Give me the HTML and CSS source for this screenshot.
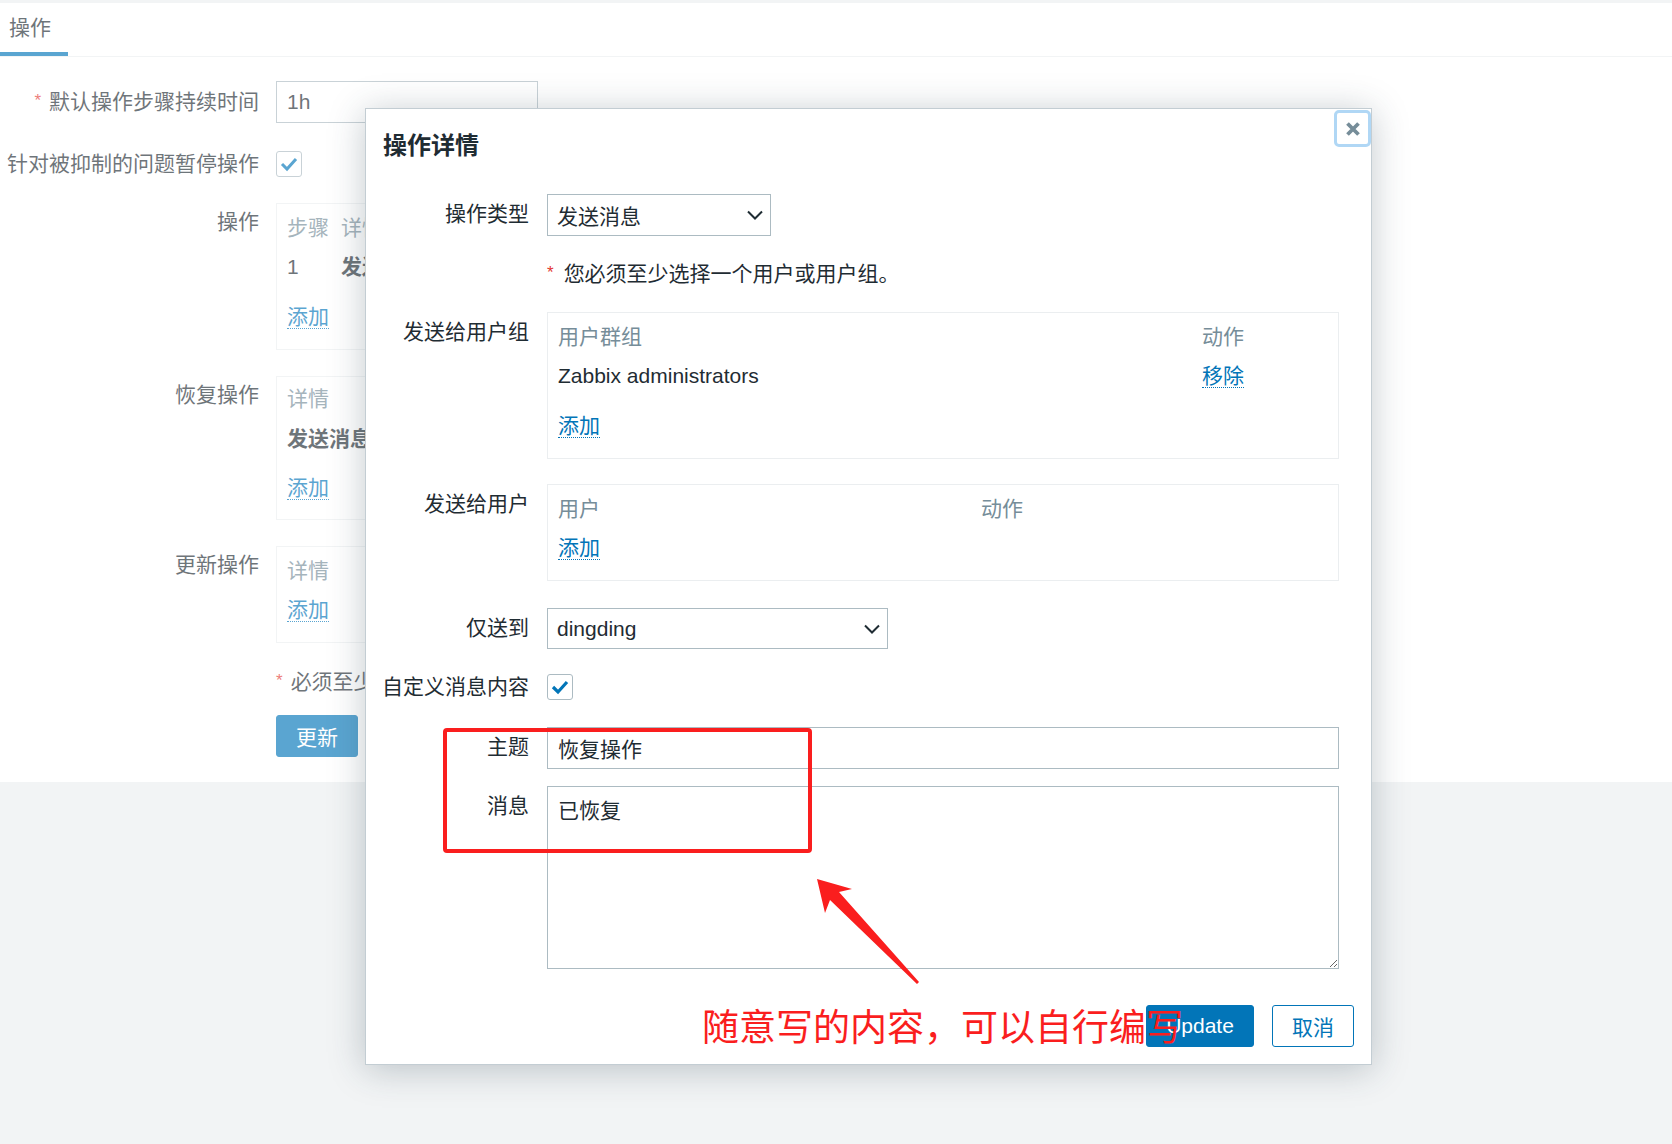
FILE: index.html
```html
<!DOCTYPE html>
<html lang="zh-CN">
<head>
<meta charset="utf-8">
<title>操作详情</title>
<link rel="stylesheet" href="styles.css">
</head>
<body>
  <main class="page">
    <div class="tabs"><div class="tab">操作</div></div>
    <div class="form">
      <div class="frow">
        <div class="flabel"><span class="req">*</span>默认操作步骤持续时间</div>
        <input class="input" type="text" value="1h">
      </div>
      <div class="frow">
        <div class="flabel cb">针对被抑制的问题暂停操作</div>
        <div class="checkbox"><svg width="20" height="20" viewBox="0 0 20 20"><polyline points="3,10 8,15 17,5" fill="none" stroke="#0275b8" stroke-width="3"/></svg></div>
      </div>
      <div class="frow">
        <div class="flabel tb">操作</div>
        <div class="tbox lbox">
          <div class="trow ops"><span class="th">步骤</span><span class="th">详情</span></div>
          <div class="trow ops"><span>1</span><span class="b">发送消息给用户组: Zabbix administrators 通过 dingding</span></div>
          <div class="add-row"><span class="link">添加</span></div>
        </div>
      </div>
      <div class="frow">
        <div class="flabel tb">恢复操作</div>
        <div class="tbox lbox short">
          <div class="trow head"><span class="th">详情</span></div>
          <div class="trow"><span class="b">发送消息给用户组: Zabbix administrators 通过 dingding</span></div>
          <div class="add-row"><span class="link">添加</span></div>
        </div>
      </div>
      <div class="frow">
        <div class="flabel tb">更新操作</div>
        <div class="tbox lbox">
          <div class="trow"><span class="th">详情</span></div>
          <div class="add-row tight"><span class="link">添加</span></div>
        </div>
      </div>
      <div class="frow">
        <div class="flabel"></div>
        <div class="note"><span class="req">*</span>必须至少设置一个问题、恢复或更新操作。</div>
      </div>
      <div class="frow btnrow">
        <div class="flabel"></div>
        <button class="btn primary">更新</button>
      </div>
    </div>
  </main>

  <div class="dim"></div>

  <section class="dialog">
    <button class="close" aria-label="close"><svg width="16" height="16" viewBox="0 0 16 16"><path d="M2.5 2.5 L13.5 13.5 M13.5 2.5 L2.5 13.5" stroke="#768d99" stroke-width="3.8" fill="none"/></svg></button>
    <div class="dlg-head"><h2 class="title">操作详情</h2></div>
    <div class="dlg-form">
      <div class="drow">
        <div class="dlabel">操作类型</div>
        <div class="select type"><span>发送消息</span><svg width="16" height="10" viewBox="0 0 16 10"><polyline points="1,1.5 8,8.5 15,1.5" fill="none" stroke="#1f2c33" stroke-width="2"/></svg></div>
      </div>
      <div class="drow">
        <div class="dlabel"></div>
        <div class="hint"><span class="req">*</span>您必须至少选择一个用户或用户组。</div>
      </div>
      <div class="drow">
        <div class="dlabel">发送给用户组</div>
        <div class="tbox field">
          <div class="trow grp"><span class="th">用户群组</span><span class="th">动作</span></div>
          <div class="trow grp"><span>Zabbix administrators</span><span><span class="link">移除</span></span></div>
          <div class="add-row"><span class="link">添加</span></div>
        </div>
      </div>
      <div class="drow">
        <div class="dlabel">发送给用户</div>
        <div class="tbox field">
          <div class="trow usr"><span class="th">用户</span><span class="th">动作</span></div>
          <div class="add-row tight"><span class="link">添加</span></div>
        </div>
      </div>
      <div class="drow mt2">
        <div class="dlabel">仅送到</div>
        <div class="select media"><span>dingding</span><svg width="16" height="10" viewBox="0 0 16 10"><polyline points="1,1.5 8,8.5 15,1.5" fill="none" stroke="#1f2c33" stroke-width="2"/></svg></div>
      </div>
      <div class="drow">
        <div class="dlabel cb">自定义消息内容</div>
        <div class="checkbox"><svg width="20" height="20" viewBox="0 0 20 20"><polyline points="3,10 8,15 17,5" fill="none" stroke="#0275b8" stroke-width="3.2"/></svg></div>
      </div>
      <div class="drow mt2">
        <div class="dlabel">主题</div>
        <input class="input wide" type="text" value="恢复操作">
      </div>
      <div class="drow tight-top">
        <div class="dlabel">消息</div>
        <textarea class="textarea">已恢复</textarea>
      </div>
    </div>
    <div class="dlg-foot">
      <button class="btn primary upd">Update</button>
      <button class="btn ghost">取消</button>
    </div>
  </section>

  <div class="anno-box"></div>
  <svg class="anno-arrow" width="116" height="120" viewBox="0 0 116 120">
    <polygon points="7,9 42,19 29,22 109,112 107,114 20,30 15,43" fill="#fa1e1e"/>
  </svg>
  <div class="anno-text">随意写的内容，可以自行编写</div>
</body>
</html>
```

FILE: styles.css
```css
* { box-sizing: border-box; }

html, body { margin: 0; padding: 0; }

body {
  position: relative;
  width: 1672px;
  height: 1144px;
  overflow: hidden;
  background: #ebeef0;
  font-family: "Liberation Sans", "Noto Sans CJK SC", sans-serif;
  font-size: 21px;
  color: #1f2c33;
}

/* ---------- page behind the dialog ---------- */
.page {
  margin-top: 3px;
  background: #fff;
  padding-bottom: 25px;
}

.tabs {
  display: flex;
  height: 54px;
  border-bottom: 1px solid #ebeef0;
}

.tab {
  height: 53px;
  padding: 0 17px 0 9px;
  line-height: 49px;
  border-bottom: 4px solid #0275b8;
}

.form {
  display: flex;
  flex-direction: column;
  gap: 26px;
  padding-top: 24px;
}

.frow {
  display: flex;
  gap: 17px;
  align-items: flex-start;
}

.flabel {
  flex: none;
  width: 259px;
  text-align: right;
  line-height: 42px;
  white-space: nowrap;
}
.flabel.cb { line-height: 26px; }
.flabel.tb { line-height: 38px; }

.req {
  color: #e33734;
  font-size: 17px;
  margin-right: 8px;
  position: relative;
  top: -3px;
}

.input {
  width: 262px;
  height: 42px;
  border: 1px solid #acbbc2;
  padding: 0 10px;
  font: inherit;
  color: #1f2c33;
  background: #fff;
  outline: none;
  margin: 0;
}
.input.wide { width: 792px; height: 42px; }

.checkbox {
  width: 26px;
  height: 26px;
  border: 1px solid #acbbc2;
  border-radius: 3px;
  background: #fff;
  display: flex;
  align-items: center;
  justify-content: center;
}

.tbox {
  border: 1px solid #ebeef0;
  padding: 4px 10px 13px;
  white-space: nowrap;
  background: #fff;
}
.lbox { width: 640px; }
.lbox.short { padding: 1px 10px 12px; }
.lbox.short .trow.head { height: 41px; line-height: 41px; }
.lbox.short .add-row { margin-top: 10px; }

.trow {
  display: grid;
  grid-template-columns: 1fr;
  height: 39px;
  line-height: 39px;
}
.trow.ops { grid-template-columns: 54px 1fr; }
.trow.grp { grid-template-columns: 644px 1fr; }
.trow.usr { grid-template-columns: 423px 1fr; }

.th { color: #768d99; }
.b { font-weight: bold; }

.add-row {
  margin-top: 11px;
  height: 39px;
  line-height: 39px;
}
.add-row.tight { margin-top: 0; }

.link {
  color: #0275b8;
  border-bottom: 1px dotted #0275b8;
}

.note {
  height: 26px;
  line-height: 26px;
  white-space: nowrap;
}

.btnrow { margin-top: -6px; }

.btn {
  height: 42px;
  font: inherit;
  border-radius: 3px;
  cursor: pointer;
  margin: 0;
}
.btn.primary {
  background: #0275b8;
  border: 1px solid #0275b8;
  color: #fff;
  padding: 0 19px;
}
.btn.ghost {
  background: #fff;
  border: 1px solid #0275b8;
  color: #0275b8;
  padding: 0 19px;
}
.btn.upd { width: 108px; }
.btn.ghost { width: 82px; }

/* ---------- dim layer over the page ---------- */
.dim {
  position: absolute;
  inset: 0;
  background: rgba(255, 255, 255, 0.35);
}

/* ---------- dialog ---------- */
.dialog {
  position: absolute;
  left: 365px;
  top: 108px;
  width: 1007px;
  height: 957px;
  background: #fff;
  border: 1px solid #c3cdd3;
  box-shadow: 0 4px 34px rgba(40, 60, 75, 0.28);
}

.close {
  position: absolute;
  top: 1px;
  right: 0;
  width: 37px;
  height: 37px;
  padding: 0;
  margin: 0;
  background: #fff;
  border: 3px solid #b0d7f5;
  border-radius: 5px;
  display: flex;
  align-items: center;
  justify-content: center;
}

.dlg-head {
  height: 85px;
  padding: 22px 0 0 17px;
}

.title {
  margin: 0;
  font-size: 24px;
  font-weight: bold;
  line-height: 30px;
  color: #1f2c33;
}

.dlg-form {
  display: flex;
  flex-direction: column;
  gap: 25px;
  padding-right: 32px;
}

.drow {
  display: flex;
  gap: 18px;
  align-items: flex-start;
}
.drow.mt2 { margin-top: 2px; }
.drow.tight-top { margin-top: -8px; }

.dlabel {
  flex: none;
  width: 163px;
  text-align: right;
  line-height: 40px;
  white-space: nowrap;
}
.dlabel.cb { line-height: 26px; }

.field { width: 792px; }

.select {
  height: 42px;
  border: 1px solid #acbbc2;
  padding: 0 7px 0 9px;
  display: flex;
  align-items: center;
  justify-content: space-between;
  background: #fff;
}
.select.type { width: 224px; }
.select.media { width: 341px; height: 41px; }

.hint {
  height: 26px;
  line-height: 26px;
  white-space: nowrap;
}
.hint .req { margin-right: 10px; }

.textarea {
  width: 792px;
  height: 183px;
  border: 1px solid #acbbc2;
  padding: 10px 10px;
  font: inherit;
  line-height: 28px;
  color: #1f2c33;
  resize: both;
  outline: none;
  margin: 0;
}

.dlg-foot {
  display: flex;
  justify-content: flex-end;
  gap: 18px;
  margin-top: 36px;
  padding-right: 17px;
}

/* ---------- red annotations ---------- */
.anno-box {
  position: absolute;
  left: 443px;
  top: 728px;
  width: 369px;
  height: 125px;
  border: 4.5px solid #fa1e1e;
  border-radius: 4px;
}

.anno-arrow {
  position: absolute;
  left: 810px;
  top: 870px;
}

.anno-text {
  position: absolute;
  left: 702px;
  top: 1006px;
  font-family: "Noto Sans CJK SC", sans-serif;
  font-size: 37px;
  line-height: 38px;
  color: #fa1e1e;
  white-space: nowrap;
}
```
